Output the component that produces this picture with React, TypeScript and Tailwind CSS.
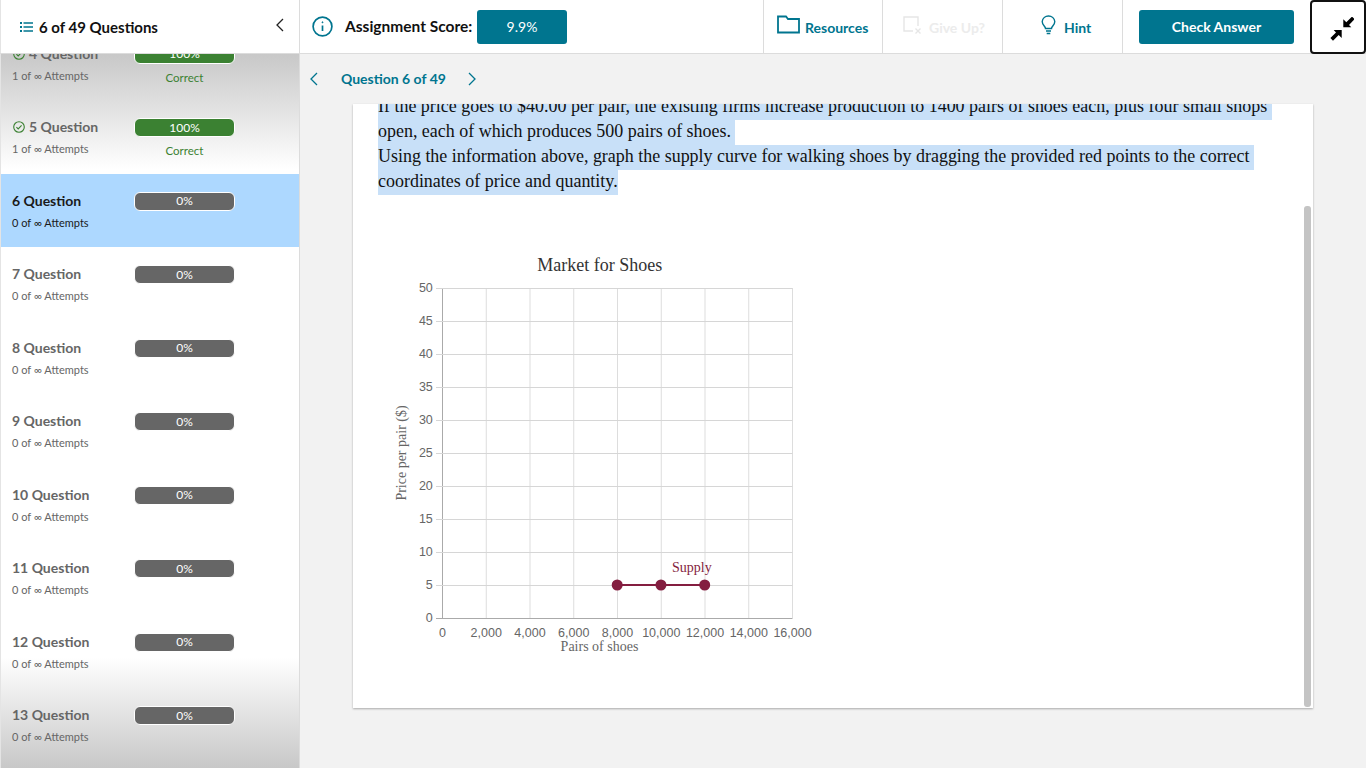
import React from "react";

const ui = { fontFamily: '"Lato", "Noto Sans", sans-serif' };
const serif = { fontFamily: '"Liberation Serif", serif' };
const sans = '"Liberation Sans", sans-serif';
const serifName = '"Liberation Serif", serif';

type Row = { n: number; correct?: boolean; active?: boolean };
const rows: Row[] = [
  { n: 4, correct: true },
  { n: 5, correct: true },
  { n: 6, active: true },
  { n: 7 },
  { n: 8 },
  { n: 9 },
  { n: 10 },
  { n: 11 },
  { n: 12 },
  { n: 13 },
];

function CheckCircle() {
  return (
    <svg width="12" height="12" viewBox="0 0 12 12" fill="none" stroke="#3b8132" strokeWidth="1.1" className="shrink-0 ml-[1px]">
      <circle cx="6" cy="6" r="5.3" />
      <path d="M3.4 6.2 5.2 8 8.6 4.4" />
    </svg>
  );
}

function QuestionRow({ n, correct, active }: Row) {
  return (
    <div className={`relative h-[73.5px] flex pl-[11px] pt-[17px] ${active ? "bg-[#add8ff] text-[#1a1a1a]" : "text-[#666]"}`}>
      <div className="w-[122px] shrink-0">
        <div className="flex items-center gap-[4px] h-5 text-[14px] font-bold whitespace-nowrap leading-5">
          {correct && <CheckCircle />}
          <span>{n} Question</span>
        </div>
        <div className="mt-[4px] h-4 text-[11px] leading-4 whitespace-nowrap">{correct ? "1" : "0"} of ∞ Attempts</div>
      </div>
      <div className="w-[101px]">
        <div
          className={`mt-[1px] h-[19px] rounded-[6px] border border-white flex items-center justify-center text-[12px] text-white ${correct ? "bg-[#3b8132]" : "bg-[#666]"}`}
        >
          {correct ? "100%" : "0%"}
        </div>
        {correct && <div className="mt-[6px] text-center text-[11.5px] leading-4 text-[#3b8132]">Correct</div>}
      </div>
    </div>
  );
}

function Chart() {
  const xs = [0, 2000, 4000, 6000, 8000, 10000, 12000, 14000, 16000];
  const ys = [0, 5, 10, 15, 20, 25, 30, 35, 40, 45, 50];
  const px = (v: number) => 62.5 + (v / 16000) * 350;
  const py = (v: number) => 368 - (v / 50) * 330;
  return (
    <svg width="440" height="410" viewBox="0 0 440 410" className="block">
      <text x="219.8" y="21" textAnchor="middle" fontFamily={serifName} fontSize="18" fill="#333">Market for Shoes</text>
      {xs.map((v) => (
        <line key={v} x1={px(v)} x2={px(v)} y1="38" y2="368" stroke={v === 0 ? "#aaa" : "#ddd"} />
      ))}
      {ys.map((v) => (
        <line key={v} x1="56" x2="412.5" y1={py(v) + 0.5} y2={py(v) + 0.5} stroke={v === 0 ? "#aaa" : "#d6d6d6"} />
      ))}
      {ys.map((v) => (
        <text key={v} x="52.8" y={py(v) + 4} textAnchor="end" fontFamily={sans} fontSize="12.5" fill="#666">{v}</text>
      ))}
      {xs.map((v) => (
        <text key={v} x={px(v)} y="386.5" textAnchor="middle" fontFamily={sans} fontSize="12.5" fill="#666">{v.toLocaleString("en-US")}</text>
      ))}
      <text x="219.5" y="401" textAnchor="middle" fontFamily={serifName} fontSize="14" fill="#666">Pairs of shoes</text>
      <text transform="translate(26 203) rotate(-90)" textAnchor="middle" fontFamily={serifName} fontSize="14" fill="#666">Price per pair ($)</text>
      <line x1={px(8000)} x2={px(12000)} y1="335" y2="335" stroke="#841e40" strokeWidth="2" />
      {[8000, 10000, 12000].map((v) => (
        <circle key={v} cx={px(v) - 0.3} cy="335" r="5.5" fill="#841e40" />
      ))}
      <text x="292" y="322" fontFamily={serifName} fontSize="14" fill="#841e40">Supply</text>
    </svg>
  );
}

const Sel = ({ children }: { children: React.ReactNode }) => (
  <div className="h-[25px] leading-[22px]">
    <span className="inline-block h-[25px] bg-[#c8e0f8] whitespace-pre">{children}</span>
  </div>
);

export default function App() {
  return (
    <div className="w-[1366px] h-[768px] flex flex-col overflow-hidden bg-[#f2f2f2]" style={ui}>
      <header className="relative z-20 h-[54px] shrink-0 flex bg-white border-b border-[#dcdcdc]">
        <div className="w-[300px] shrink-0 flex items-center pl-[19px] pr-[14px] border-x border-[#dcdcdc] border-l-[#e4e4e4]">
          <svg width="13" height="12" viewBox="0 0 13 12" fill="#00758f" className="shrink-0">
            <rect x="0" y="1" width="2" height="2" />
            <rect x="0" y="5" width="2" height="2" />
            <rect x="0" y="9" width="2" height="2" />
            <rect x="3.5" y="1.25" width="9.5" height="1.5" />
            <rect x="3.5" y="5.25" width="9.5" height="1.5" />
            <rect x="3.5" y="9.25" width="9.5" height="1.5" />
          </svg>
          <span className="ml-[6px] text-[15px] font-bold text-[#111] translate-y-[1px]">6 of 49 Questions</span>
          <svg width="10" height="14" viewBox="0 0 10 14" fill="none" stroke="#222" strokeWidth="1.3" className="ml-auto -mt-[3px]">
            <path d="M8 1 2 7l6 6" />
          </svg>
        </div>
        <div className="w-[463px] shrink-0 flex items-center pl-[12px]">
          <svg width="21" height="21" viewBox="0 0 21 21" fill="none" stroke="#00758f" strokeWidth="1.7" className="shrink-0 -mt-[1px]">
            <circle cx="10.5" cy="10.5" r="9.4" />
            <path d="M10.5 9.5v5.5" />
            <circle cx="10.5" cy="6.3" r="0.5" fill="#00758f" strokeWidth="1" />
          </svg>
          <span className="ml-[12px] w-[132px] text-[15.5px] font-bold text-[#111] whitespace-nowrap">Assignment Score:</span>
          <div className="w-[90px] h-[34px] rounded-[3px] bg-[#00758f] text-white text-[14px] flex items-center justify-center">9.9%</div>
        </div>
        <div className="w-[119px] shrink-0 flex items-center pl-[13px] border-l border-[#dcdcdc] text-[#00758f] font-bold text-[14px]">
          <svg width="23" height="19" viewBox="0 0 23 19" fill="none" stroke="#00758f" strokeWidth="1.8" className="shrink-0 -mt-[4px]">
            <path d="M1 17.5V1.5h8l2 2.5h11v13.5z" />
          </svg>
          <span className="ml-[5px] translate-y-[1px]">Resources</span>
        </div>
        <div className="w-[120px] shrink-0 flex items-center pl-[20px] border-l border-[#dcdcdc] text-[#ececec] font-bold text-[14px]">
          <svg width="19" height="20" viewBox="0 0 19 20" fill="none" stroke="#e6e6e6" strokeWidth="1.4" className="shrink-0 -mt-[2px]">
            <path d="M10 15H1V1h14v9" />
            <path d="M12.5 12.5l5 5M17.5 12.5l-5 5" />
          </svg>
          <span className="ml-[7px] translate-y-[1px]">Give Up?</span>
        </div>
        <div className="w-[120px] shrink-0 flex items-center pl-[38px] border-l border-[#dcdcdc] text-[#00758f] font-bold text-[14px]">
          <svg width="15" height="20" viewBox="0 0 15 20" fill="none" stroke="#00758f" strokeWidth="1.4" className="shrink-0 -mt-[4px]">
            <path d="M4.5 13.5c0-2-3.3-3.4-3.3-7A6.3 6.3 0 0 1 7.5 1a6.3 6.3 0 0 1 6.3 5.5c0 3.6-3.3 5-3.3 7z" />
            <path d="M5 16h5M5.7 18.5h3.6" />
          </svg>
          <span className="ml-[8px] translate-y-[1px]">Hint</span>
        </div>
        <div className="flex-1 flex items-center pl-[16px] border-l border-[#dcdcdc]">
          <div className="w-[155px] h-[34px] rounded-[3px] bg-[#00758f] text-white font-bold text-[14px] flex items-center justify-center">Check Answer</div>
        </div>
        <div className="absolute right-0 top-0 w-[56px] h-[54px] bg-white border-2 border-[#111] rounded-[4px] flex items-center justify-center">
          <svg width="24" height="24" viewBox="0 0 24 24" fill="#000" className="ml-[8px] mt-[4px]">
            <path d="M13.3 10.3V2.3L16.3 5.3 22 -0.4 24.6 2.2 19 7.9 21.3 10.3Z" />
            <path d="M11.7 13V21L8.7 18 3 23.7 0.4 21.1 6 15.4 3.7 13Z" />
          </svg>
        </div>
      </header>

      <div className="flex-1 flex min-h-0">
        <aside className="relative w-[300px] shrink-0 overflow-hidden bg-white border-x border-[#dcdcdc] border-l-[#e4e4e4]">
          <div className="absolute inset-x-0 top-0 h-[115px] bg-gradient-to-b from-[#c8c8c8] to-white" />
          <div className="absolute inset-x-0 bottom-0 h-[110px] bg-gradient-to-t from-[#c8c8c8] to-white" />
          <div className="relative -mt-[27.5px]">
            {rows.map((r) => (
              <QuestionRow key={r.n} {...r} />
            ))}
          </div>
        </aside>

        <main className="flex-1 min-w-0 flex flex-col pl-[53px] pr-[53px] pb-[60px]">
          <div className="h-[50px] shrink-0 relative -ml-[53px] flex items-center pl-[9px] pb-[1px] text-[#00758f] font-bold text-[14px]">
            <svg width="10" height="14" viewBox="0 0 10 14" fill="none" stroke="#00758f" strokeWidth="1.3">
              <path d="M8 1 2 7l6 6" />
            </svg>
            <span className="ml-[22px] w-[122px] whitespace-nowrap">Question 6 of 49</span>
            <svg width="10" height="14" viewBox="0 0 10 14" fill="none" stroke="#00758f" strokeWidth="1.3" className="ml-[4px]">
              <path d="M2 1l6 6-6 6" />
            </svg>
          </div>
          <section className="relative flex-1 bg-white overflow-hidden shadow-[0_1px_2px_rgba(0,0,0,0.3)] pl-[25px]">
            <div className="-mt-[9px] text-[17.97px] text-[#111]" style={serif}>
              <Sel>If the price goes to $40.00 per pair, the existing firms increase production to 1400 pairs of shoes each, plus four small shops </Sel>
              <Sel>open, each of which produces 500 pairs of shoes. </Sel>
              <Sel>Using the information above, graph the supply curve for walking shoes by dragging the provided red points to the correct </Sel>
              <Sel>coordinates of price and quantity.</Sel>
            </div>
            <div className="mt-[55px] ml-[2px]">
              <Chart />
            </div>
            <div className="absolute right-[2px] top-[102px] bottom-[1px] w-[7px] rounded-[3px] bg-[#c4c4c4]" />
          </section>
        </main>
      </div>
    </div>
  );
}
